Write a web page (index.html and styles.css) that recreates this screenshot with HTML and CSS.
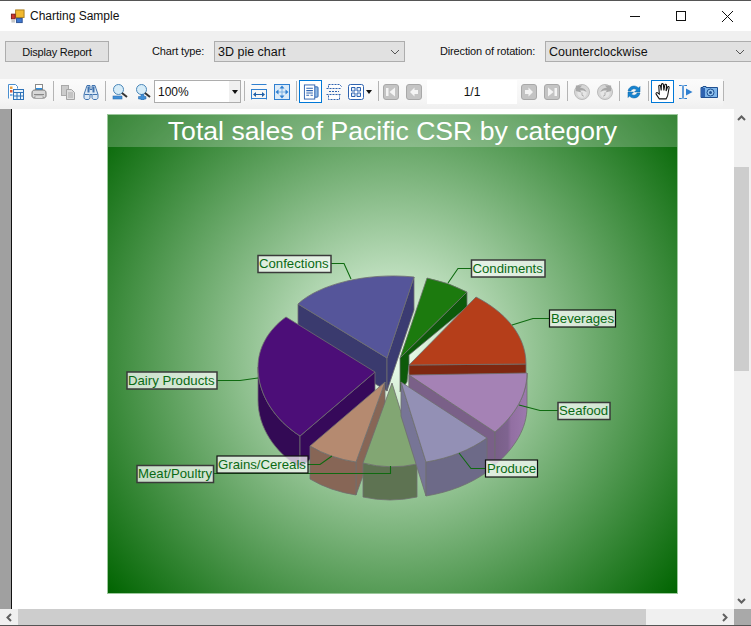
FILE: index.html
```html
<!DOCTYPE html>
<html lang="en">
<head>
<meta charset="utf-8">
<title>Charting Sample</title>
<link rel="stylesheet" href="styles.css">
</head>
<body>
<div class="window">
  <header class="titlebar">
    <svg class="app-icon" viewBox="0 0 16 16"><rect x="6" y="1" width="9" height="8" fill="#f2b92f" stroke="#a87a18"/><rect x="1.5" y="5.5" width="4" height="5" fill="#d0342c" stroke="#7a1c18"/><rect x="7" y="10" width="6" height="4.5" fill="#3f78d0" stroke="#2a4f90"/><rect x="1.5" y="11.5" width="4" height="3" fill="#c8c8c8"/></svg>
    <span class="title-text">Charting Sample</span>
    <div class="win-controls">
      <svg class="win-btn" viewBox="0 0 46 30"><path d="M18 15.5h10" stroke="#111" fill="none"/></svg>
      <svg class="win-btn" viewBox="0 0 46 30"><rect x="18.5" y="10.5" width="9" height="9" stroke="#111" fill="none"/></svg>
      <svg class="win-btn" viewBox="0 0 46 30"><path d="M18 10l11 11M29 10l-11 11" stroke="#111" fill="none"/></svg>
    </div>
  </header>

  <div class="controls">
    <button class="action">Display Report</button>
    <label class="field-label chart-label">Chart type:</label>
    <div class="combo chart-combo"><span>3D pie chart</span><svg class="chev" viewBox="0 0 10 6"><path d="M1 1l4 4 4-4" fill="none" stroke="#555"/></svg></div>
    <label class="field-label dir-label">Direction of rotation:</label>
    <div class="combo dir-combo"><span>Counterclockwise</span><svg class="chev" viewBox="0 0 10 6"><path d="M1 1l4 4 4-4" fill="none" stroke="#555"/></svg></div>
  </div>

  <div class="toolbar">
    <span class="tool"><svg class="ico" viewBox="0 0 16 16"><path d="M.5 14.500V.5h7l2 2v2" fill="#fff" stroke="#4a8fd0"/><rect x="2" y="2.500" width="2.500" height="2.500" fill="#e8a040"/><rect x="2" y="6" width="2.500" height="2.500" fill="#d85a3a"/><rect x="2" y="10" width="2.500" height="2" fill="#7fb0e0"/><rect x="5.500" y="5.500" width="10" height="10" fill="#eaf3fb" stroke="#2f73b8"/><path d="M5.500 8.500h10M5.500 12h10M9 8.500v7M12.500 8.500v7" stroke="#2f73b8" fill="none"/></svg></span>
    <span class="tool"><svg class="ico" viewBox="0 0 16 16"><rect x="4.500" y=".5" width="7" height="6" fill="#fff" stroke="#8a8a8a"/><rect x="5" y="4" width="6" height="2.500" fill="#2f8fe0"/><path d="M1 9c0-2 1-3 3-3h8c2 0 3 1 3 3v3c0 1-1 2-2 2H3c-1 0-2-1-2-2z" fill="#d8d8d8" stroke="#777"/><path d="M3 10.500h10" stroke="#888"/><rect x="4" y="12" width="8" height="2" fill="#fff" stroke="#888" stroke-width=".6"/></svg></span>
    <span class="sep"></span>
    <span class="tool"><svg class="ico" viewBox="0 0 16 16"><rect x="1.500" y="1.500" width="7" height="10" fill="#ccc" stroke="#aaa"/><path d="M6.500 5.500h5l3 3v7h-8z" fill="#ddd" stroke="#a5a5a5"/><path d="M8 9h5M8 11h5M8 13h5" stroke="#aaa"/></svg></span>
    <span class="tool"><svg class="ico" viewBox="0 0 16 16"><path d="M4 1.500h3v4h2v-4h3l1 3 2 6v3c0 1-1 2-2 2h-2c-1 0-2-1-2-2v-3H7v3c0 1-1 2-2 2H3c-1 0-2-1-2-2v-3l2-6z" fill="#dce9f6" stroke="#3f72ae"/><path d="M1.500 10.500h5M9.500 10.500h5" stroke="#3f72ae"/><rect x="4.500" y="2.500" width="2" height="6" fill="#3f72ae"/><rect x="9.500" y="2.500" width="2" height="6" fill="#3f72ae"/></svg></span>
    <span class="sep"></span>
    <span class="tool"><svg class="ico" viewBox="0 0 16 16"><circle cx="6.500" cy="5.500" r="5" fill="#d6ecf8" stroke="#4a86b8"/><path d="M10 9l5 4" stroke="#333" stroke-width="2"/><rect x="1" y="12" width="9" height="3" fill="#3f8fd8" stroke="#2f6fae" stroke-width=".6"/></svg></span>
    <span class="tool"><svg class="ico" viewBox="0 0 16 16"><circle cx="6.500" cy="5.500" r="5" fill="#d6ecf8" stroke="#4a86b8"/><path d="M10 9l5 4" stroke="#333" stroke-width="2"/><path d="M6 10.500h3v2h2v2.500H9v1H6v-1H3.500v-2.500H6z" fill="#3f8fd8" stroke="#2f6fae" stroke-width=".6"/></svg></span>
    <div class="zoom-box"><span>100%</span><span class="zoom-drop"><i class="tri"></i></span></div>
    <span class="sep"></span>
    <span class="tool"><svg class="ico" viewBox="0 0 16 16"><path d="M.5 .5h15M0 5.500h16M0 14.500h16" stroke="#2f7fd0" fill="none"/><path d="M.5 5.500v10M15.500 5.500v10" stroke="#2f7fd0"/><path d="M3 10.500h10" stroke="#1f5fa8"/><path d="M2 10.500l3-2.500v5zM14 10.500l-3-2.500v5z" fill="#1f5fa8"/></svg></span>
    <span class="tool"><svg class="ico" viewBox="0 0 16 16"><rect x=".5" y=".5" width="15" height="15" fill="#dcebf8" stroke="#2f7fd0"/><path d="M8 3.500v9M3.500 8h9" stroke="#7fb0e0"/><path d="M8 1.500l2.500 3h-5zM8 14.500l2.500-3h-5zM1.500 8l3-2.500v5zM14.500 8l-3-2.500v5z" fill="#2f7fd0"/></svg></span>
    <span class="sep"></span>
    <span class="tool on"><svg class="ico" viewBox="0 0 17 16"><rect x="11" y="2.500" width="5" height="11" rx="1" fill="#8fb8e4" stroke="#2f63b0"/><rect x="1.500" y=".5" width="11" height="15" fill="#fff" stroke="#2f63b0"/><path d="M3.500 4h7M3.500 6.500h7M3.500 9h7M3.500 11.500h3M8 11.500h2.500" stroke="#2f63b0" stroke-width="1.200"/></svg></span>
    <span class="tool"><svg class="ico" viewBox="0 0 16 16"><path d="M2.500 3.500v-3h11l2 2v1M2.500 11.500v4h11v-4" fill="#fff" stroke="#2f63b0" stroke-dasharray="2 1"/><path d="M.5 4.500h14M.5 10.500h15M3 7.500h10" stroke="#2f63b0" stroke-dasharray="2 1"/></svg></span>
    <span class="tool tool-wide"><svg class="ico" viewBox="0 0 16 16"><rect x=".5" y=".5" width="15" height="15" rx="2" fill="#fff" stroke="#2f63b0"/><path d="M3.500 3.500h3.500v3.500H3.500zM9 3.500h3.500v3.500H9zM3.500 9H7v3.500H3.500zM9 9h3.500v3.500H9z" fill="#e4eefa" stroke="#2f63b0"/></svg><i class="tri"></i></span>
    <span class="sep sep-nav"></span>
    <span class="tool"><svg class="ico" viewBox="0 0 16 16"><rect x=".5" y=".5" width="15" height="15" rx="2.500" fill="#c4c4c4" stroke="#a8a8a8"/><path d="M3 4h2.500v8H3zM12 3.500v9L6.500 8z" fill="#f4f4f4"/></svg></span>
    <span class="tool"><svg class="ico" viewBox="0 0 16 16"><rect x=".5" y=".5" width="15" height="15" rx="2.500" fill="#c4c4c4" stroke="#a8a8a8"/><path d="M4 8l4.500-4.500V6H12v4H8.500v2.500z" fill="#f4f4f4"/></svg></span>
    <div class="page-box">1/1</div>
    <span class="tool"><svg class="ico" viewBox="0 0 16 16"><rect x=".5" y=".5" width="15" height="15" rx="2.500" fill="#c4c4c4" stroke="#a8a8a8"/><path d="M12 8L7.500 3.500V6H4v4h3.500v2.500z" fill="#f4f4f4"/></svg></span>
    <span class="tool"><svg class="ico" viewBox="0 0 16 16"><rect x=".5" y=".5" width="15" height="15" rx="2.500" fill="#c4c4c4" stroke="#a8a8a8"/><path d="M13 4h-2.500v8H13zM4 3.500v9L9.500 8z" fill="#f4f4f4"/></svg></span>
    <span class="sep sep-undo"></span>
    <span class="tool"><svg class="ico" viewBox="0 0 17 17"><circle cx="8.500" cy="8.500" r="8" fill="#d6d6d6" stroke="#b8b8b8"/><circle cx="8.500" cy="9.500" r="5" fill="#e6e6e6"/><path d="M2 1.500h6.500L6.500 4c3 0 6 1.500 7 4.500-2-1.500-4.500-2-7-1.500L8 9 2 7.500z" fill="#a8a8a8"/><path d="M8.500 9v3l2 1" stroke="#aaa" fill="none"/></svg></span>
    <span class="tool"><svg class="ico" viewBox="0 0 17 17"><circle cx="8.500" cy="8.500" r="8" fill="#d6d6d6" stroke="#b8b8b8"/><circle cx="8.500" cy="9.500" r="5" fill="#e6e6e6"/><path d="M15 1.500H8.500L10.500 4c-3 0-6 1.500-7 4.500 2-1.500 4.500-2 7-1.500L9 9l6-1.500z" fill="#a8a8a8"/><path d="M8.500 9v3l-2 1" stroke="#aaa" fill="none"/></svg></span>
    <span class="sep"></span>
    <span class="tool"><svg class="ico" viewBox="0 0 16 16"><path d="M2 7c.5-3 3-5 6-5 2 0 3.500 1 4.500 2L14 2.500V8H8.500l2-2c-.7-.8-1.500-1.200-2.500-1.200-1.500 0-2.700 1-3 2.200zM14 9c-.5 3-3 5-6 5-2 0-3.500-1-4.500-2L2 13.500V8h5.500l-2 2c.7.8 1.500 1.200 2.500 1.200 1.500 0 2.700-1 3-2.200z" fill="#1583d0" stroke="#0f62a0" stroke-width=".5"/></svg></span>
    <span class="sep"></span>
    <span class="tool on"><svg class="ico ico-hand" viewBox="0 0 17 18"><path d="M5 16c-1-1.500-2-3-3-4.500-.6-1 .6-2 1.500-1.200L5 11.500 4.500 4c0-1.200 1.500-1.200 1.700 0l.6 4L7 2.500c0-1.300 1.800-1.300 1.900 0L9.300 8l.9-5c.2-1.200 1.800-1 1.700.2l-.5 5.300 1.400-3.700c.4-1 1.800-.6 1.500.5L13 12.500c-.4 1.500-1 2.500-1.500 3.500z" fill="#fff" stroke="#111"/></svg></span>
    <span class="tool"><svg class="ico" viewBox="0 0 16 16"><path d="M1 1.500h2.500c1 0 1.500.5 1.500 1v11c0 .5-.5 1-1.500 1H1M9 1.500H6.500c-1 0-1.500.5-1.500 1v11c0 .5.500 1 1.500 1H9" fill="none" stroke="#2f7fd0"/><path d="M8 4.500v7L14.500 8z" fill="#2f7fd0"/></svg></span>
    <span class="tool"><svg class="ico ico-cam" viewBox="0 0 18 14"><path d="M1 2.500h2v-1h3v1h11.500v10H1z" fill="#7fb6ea" stroke="#1f4f90"/><rect x="1" y="3" width="4" height="9" fill="#2f63b0"/><circle cx="10.500" cy="7.500" r="3.500" fill="#9ccaf0" stroke="#1f4f90"/><circle cx="10.500" cy="7.500" r="1.500" fill="#1f4f90"/></svg></span>
    <span class="sep"></span>
  </div>

  <div class="viewer">
    <div class="gutter"></div>
    <main class="page">
      <svg class="chart" viewBox="107 114 570 480" role="img">
        <defs>
          <radialGradient id="bg" gradientUnits="userSpaceOnUse" cx="392" cy="354" r="372">
            <stop offset="0" stop-color="#f0fff0"/>
            <stop offset="1" stop-color="#006400"/>
          </radialGradient>
          <linearGradient id="seafood-side" gradientUnits="userSpaceOnUse" x1="495" y1="0" x2="527" y2="0">
            <stop offset="0" stop-color="#795f88"/>
            <stop offset=".4" stop-color="#7f6490"/>
            <stop offset=".5" stop-color="#926fa2"/>
            <stop offset="1" stop-color="#9c79ad"/>
          </linearGradient>
        </defs>
        <rect class="bg" x="107" y="114" width="570" height="480"/>
        <rect class="band" x="107" y="114" width="570" height="33"/>
        <rect class="frame" x="107.500" y="114.500" width="570" height="479"/>
        <text class="chart-title" x="392.500" y="140">Total sales of Pacific CSR by category</text>

        <g class="pie">
          <!-- Confections -->
          <path fill="#3a3a6e" d="M298 304L387 358V391L298 337Z"/>
          <path fill="#3b3b72" d="M414 277L387 358V391L414 310Z"/>
          <path fill="#55559a" d="M387 358L298 304C318 285 365 272 414 277Z"/>
          <!-- Condiments -->
          <path fill="#0d5a0a" d="M467 292V307L409 355V365L407 382L400 392V358Z"/>
          <path fill="#1c7a0e" d="M400 358L427 278Q448 282 467 292Z"/>
          <!-- Beverages -->
          <path fill="#7e2710" d="M409 365L526 364V392L409 393Z"/>
          <path fill="#b53e1a" d="M409 365L476 297C505 312 526 335 526 364Z"/>
          <!-- Seafood -->
          <path fill="#7a6088" d="M409 375L495 432V465L409 408Z"/>
          <path fill="url(#seafood-side)" d="M527 373C527 395 515 415 495 432V465C515 448 527 428 527 407Z"/>
          <path fill="#a582b5" d="M409 375L527 373C527 395 515 415 495 432Z"/>
          <!-- Dairy Products -->
          <path fill="#330a55" d="M258 367C258 395 275 420 300 436V468C275 452 258 428 258 400Z"/>
          <path fill="#36095a" d="M375 372L300 436V468L375 404Z"/>
          <path fill="#4c0e78" d="M375 372L286 317C268 330 258 348 258 367C258 395 275 420 300 436Z"/>
          <!-- Grains/Cereals -->
          <path fill="#876656" d="M385 382L356 462V495L385 415Z"/>
          <path fill="#876656" d="M310 446Q330 458 356 462V495Q330 491 310 479Z"/>
          <path fill="#b58a70" d="M385 382L356 462Q330 458 310 446Z"/>
          <!-- Meat/Poultry -->
          <path fill="#5e7352" d="M363 463Q390 470 417 464V497Q390 503 363 497Z"/>
          <path fill="#82a673" d="M392 383L417 464Q390 470 363 463Z"/>
          <!-- Produce -->
          <path fill="#777596" d="M401 382L426 462V496L401 416Z"/>
          <path fill="#6d6a88" d="M426 462C450 458 470 450 487 438V472C470 484 450 492 426 496Z"/>
          <path fill="#9390b5" d="M401 382L487 438C470 450 450 458 426 462Z"/>
        </g>

        <g class="leaders">
          <path d="M331 263.500H344L351 279"/>
          <path d="M217 380.500H240L258 378"/>
          <path d="M307 464.500H320L332 456"/>
          <path d="M213 473.500H390.500V466"/>
          <path d="M471 268.500H458L448 283"/>
          <path d="M549 318.500H533L512 325"/>
          <path d="M558 410.500H540L519 405"/>
          <path d="M486 468.500H471L459 453"/>
        </g>

        <g class="labels">
          <rect class="box soft" x="258" y="255.500" width="73" height="17"/><text x="259" y="268">Confections</text>
          <rect class="box soft" x="127" y="372" width="90" height="17"/><text x="128" y="384.500">Dairy Products</text>
          <rect class="box soft" x="137" y="465.500" width="76.500" height="17"/><text x="138" y="478">Meat/Poultry</text>
          <rect class="box" x="217" y="456" width="91" height="17"/><text x="218" y="468.500">Grains/Cereals</text>
          <rect class="box soft" x="471.500" y="260" width="73.500" height="17"/><text x="472.500" y="272.500">Condiments</text>
          <rect class="box" x="549.500" y="310" width="66" height="17"/><text x="551" y="322.500">Beverages</text>
          <rect class="box soft" x="558" y="402.500" width="52" height="17"/><text x="559" y="415">Seafood</text>
          <rect class="box" x="485.500" y="460" width="52" height="17"/><text x="487" y="472.500">Produce</text>
        </g>
      </svg>
    </main>
    <div class="vscroll">
      <svg class="arrow arrow-up" viewBox="0 0 9 6"><path d="M1 5l3.500-3.500L8 5" fill="none" stroke="#606060" stroke-width="2"/></svg>
      <div class="vthumb"></div>
      <svg class="arrow arrow-down" viewBox="0 0 9 6"><path d="M1 1l3.500 3.500L8 1" fill="none" stroke="#606060" stroke-width="2"/></svg>
    </div>
  </div>

  <div class="hscroll">
    <svg class="harrow" viewBox="0 0 6 9"><path d="M5 1L1.500 4.500 5 8" fill="none" stroke="#606060" stroke-width="2"/></svg>
    <div class="hthumb"></div>
    <svg class="harrow harrow-right" viewBox="0 0 6 9"><path d="M1 1l3.500 3.500L1 8" fill="none" stroke="#606060" stroke-width="2"/></svg>
    <div class="corner"></div>
  </div>
</div>
</body>
</html>
```

FILE: styles.css
```css
* { box-sizing: border-box; }
html, body { margin: 0; padding: 0; }
body { width: 751px; height: 626px; overflow: hidden; font-family: "Liberation Sans", Arial, sans-serif; color: #111; }

.window { width: 751px; height: 626px; display: flex; flex-direction: column; background: #f0f0f0; border-top: 1px solid #555; border-bottom: 1px solid #555; overflow: hidden; }

.titlebar { height: 30px; flex: none; display: flex; align-items: center; background: #fff; padding-left: 10px; }
.app-icon { width: 15px; height: 15px; margin-top: 1px; }
.title-text { font-size: 12px; margin-left: 5px; }
.win-controls { margin-left: auto; display: flex; margin-right: 1px; }
.win-btn { width: 46px; height: 30px; display: block; }

.controls { height: 45px; flex: none; display: flex; align-items: flex-start; padding: 10px 0 0 5px; }
.action { width: 104px; height: 21px; flex: none; padding: 0; background: #e1e1e1; border: 1px solid #adadad; font: 11px "Liberation Sans", Arial, sans-serif; letter-spacing: -.2px; color: #111; }
.field-label { flex: none; font-size: 11px; line-height: 21px; letter-spacing: -.15px; }
.chart-label { margin-left: 43px; width: 62px; }
.dir-label { margin-left: 35px; width: 105px; }
.combo { height: 21px; display: flex; align-items: center; justify-content: space-between; background: #e1e1e1; border: 1px solid #adadad; font-size: 12.500px; padding: 0 4px 0 3px; flex: none; }
.chart-combo { width: 191px; }
.dir-combo { width: 207px; padding-right: 6px; letter-spacing: .05px; }
.chev { width: 10px; height: 6px; }

.toolbar { height: 29px; margin-top: 3px; flex: none; display: flex; align-items: flex-start; padding: 1px 0 0 4px; width: 723px; background: linear-gradient(#fbfbfb, #f5f5f5 70%, #f0f0f0); }
.tool { width: 23px; height: 23px; display: flex; align-items: center; justify-content: center; flex: none; border: 1px solid transparent; }
.tool.on { border: 1px solid #0078d7; background: #fff; }
.tool-wide { width: 30px; justify-content: flex-start; padding-left: 2px; gap: 2px; }
.ico { width: 16px; height: 16px; display: block; flex: none; }
.ico-hand { width: 18px; height: 19px; }
.ico-cam { width: 18px; height: 14px; }
.sep { width: 1px; height: 20px; margin: 1px 2px 0 3px; background: #b4b4b4; flex: none; }
.sep-nav { margin-right: 0; }
.sep-undo { margin-left: 4px; }
.tri { display: block; width: 0; height: 0; border: 3.500px solid transparent; border-top: 4px solid #111; border-bottom: 0; flex: none; }

.zoom-box { width: 87px; height: 23px; flex: none; display: flex; justify-content: space-between; align-items: center; background: #fff; border: 1px solid #adadad; font-size: 12px; padding-left: 3px; }
.zoom-drop { width: 11px; height: 21px; background: #f0f0f0; display: flex; align-items: center; justify-content: center; }
.page-box { width: 90px; height: 24px; margin: 0 0 0 2px; flex: none; background: #fff; font-size: 12px; line-height: 24px; text-align: center; }

.viewer { flex: 1; min-height: 0; display: flex; margin-top: 1px; }
.gutter { width: 12px; flex: none; background: #a0a0a0; border-right: 1px solid #111; }
.page { flex: 1; min-width: 0; background: #fff; padding: 5px 0 0 95px; }
.chart { width: 570px; height: 480px; display: block; overflow: visible; }
.bg { fill: url(#bg); }
.band { fill: rgba(255, 255, 255, .22); }
.frame { fill: none; stroke: #9cc89c; }
.chart-title { fill: #fff; font-size: 26.600px; text-anchor: middle; font-family: "Liberation Sans", Arial, sans-serif; }
.pie path { stroke: #6f6f6f; stroke-width: .8; }
.leaders path { fill: none; stroke: #0f6a10; stroke-width: 1.100; }
.box { fill: rgba(255, 255, 255, .72); stroke: #111; stroke-width: 1.200; }
.box.soft { stroke: #3a3a3a; stroke-width: 1.500; }
.labels text { fill: #0a6a14; font-size: 13.200px; }

.vscroll { width: 17px; flex: none; display: flex; flex-direction: column; align-items: flex-start; background: #f0f0f0; position: relative; }
.arrow { width: 9px; height: 6px; display: block; margin-left: 3px; }
.arrow-up { margin-top: 6px; }
.vthumb { width: 15px; height: 204px; background: #cdcdcd; margin-top: 46px; }
.arrow-down { margin-top: auto; margin-bottom: 5px; }

.hscroll { height: 16px; flex: none; display: flex; align-items: center; background: #f0f0f0; }
.harrow { width: 6px; height: 9px; margin-left: 6px; margin-right: 6px; flex: none; }
.hthumb { width: 628px; height: 16px; background: #cdcdcd; flex: none; }
.harrow-right { margin-left: 76px; margin-right: 0; }
.corner { width: 17px; height: 16px; margin-left: auto; background: #a9a9a9; flex: none; }
```
